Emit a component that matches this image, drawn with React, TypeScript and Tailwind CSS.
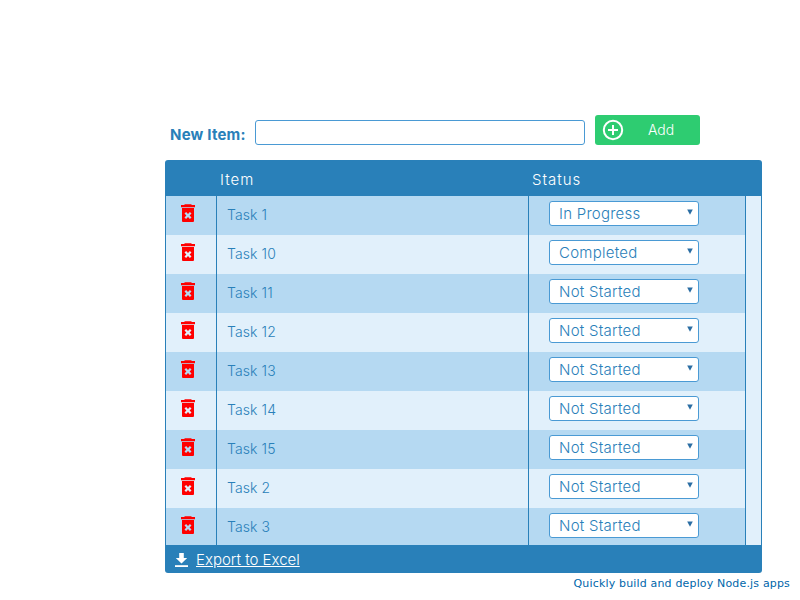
const rows = [
  { name: "Task 1", status: "In Progress" },
  { name: "Task 10", status: "Completed" },
  { name: "Task 11", status: "Not Started" },
  { name: "Task 12", status: "Not Started" },
  { name: "Task 13", status: "Not Started" },
  { name: "Task 14", status: "Not Started" },
  { name: "Task 15", status: "Not Started" },
  { name: "Task 2", status: "Not Started" },
  { name: "Task 3", status: "Not Started" },
]

function TrashIcon() {
  return (
    <svg width="16" height="19" viewBox="0 0 16 19" className="block">
      <path d="M4.5 1V0.3h7V1h3.5v2.2H1V1z" fill="#ff0000" />
      <path
        fillRule="evenodd"
        clipRule="evenodd"
        d="M2 4h12v13a1 1 0 0 1-1 1H3a1 1 0 0 1-1-1zM4.5 9.6L6.1 8 8 9.9 9.9 8l1.6 1.6-1.9 1.9 1.9 1.9L9.9 15 8 13.1 6.1 15l-1.6-1.6 1.9-1.9z"
        fill="#ff0000"
      />
    </svg>
  )
}

function PlusIcon() {
  return (
    <svg width="22" height="22" viewBox="0 0 22 22" fill="none" stroke="#fff" strokeWidth="2" className="block">
      <circle cx="11" cy="11" r="9.2" />
      <path d="M11 6v10M6 11h10" />
    </svg>
  )
}

function DownloadIcon() {
  return (
    <svg width="13" height="14" viewBox="0 0 13 14" fill="#fff" className="mt-[1px] block">
      <path d="M4.2 0h4.6v5h3.4L6.5 10.6 0.8 5h3.4z" />
      <rect x="0" y="12.2" width="13" height="1.8" />
    </svg>
  )
}

export default function App() {
  return (
    <div className="relative h-[600px] w-[800px] overflow-hidden bg-white pt-[115px] font-['Inter',sans-serif] text-[#2980b9]">
      <div className="ml-[170px] flex h-[30px] items-center">
        <label className="w-[85px] pt-[10px] text-[15px] leading-[22px] font-bold tracking-[0.2px]">New Item:</label>
        <input className="mt-[5px] h-[25px] w-[330px] rounded-[3px] border border-[#4a9ad4] bg-white" />
        <button className="ml-[10px] flex h-[30px] w-[105px] items-center rounded-[3px] bg-[#2ecc71] pl-[7px] text-[14px] font-light text-white">
          <PlusIcon />
          <span className="ml-[24px] pb-[2px]">Add</span>
        </button>
      </div>

      <div className="mt-[15px] ml-[165px] flex h-[413px] w-[597px] flex-col overflow-hidden rounded-[3px] bg-[#2980b9]">
        <div className="flex h-[36px] shrink-0 items-center pt-[4px] text-[15px] leading-[22px] font-light tracking-[1px] text-white">
          <div className="w-[55px]" />
          <div className="w-[312px]">Item</div>
          <div>Status</div>
        </div>
        <div className="h-[349px] overflow-hidden border-x border-[#2980b9] bg-[#e1f0fb]">
          {rows.map((row, i) => (
            <div
              key={row.name}
              className={`flex h-[39px] w-[580px] items-center ${i % 2 === 0 ? "bg-[#b5d9f2]" : "bg-[#e1f0fb]"}`}
            >
              <div className="flex h-full w-[51px] shrink-0 justify-center border-r border-[#2980b9] pt-[8px] pr-[7px]">
                <TrashIcon />
              </div>
              <div className="flex h-full w-[312px] shrink-0 items-center border-r border-[#2980b9] pb-[3px] pl-[10px] text-[14px] font-light tracking-[0.1px]">
                {row.name}
              </div>
              <div className="flex h-full flex-1 border-r border-[#2980b9] pt-[5px] pl-[20px]">
                <div className="relative h-[25px] w-[150px]">
                  <select
                    defaultValue={row.status}
                    className="block h-[25px] w-[150px] appearance-none rounded-[3px] border border-[#4a9ad4] bg-white pt-[1px] pl-[9px] text-[15px] font-light tracking-[0.25px] text-[#2980b9]"
                  >
                    <option>In Progress</option>
                    <option>Completed</option>
                    <option>Not Started</option>
                  </select>
                  <svg width="6" height="6" viewBox="0 0 6 6" className="pointer-events-none absolute top-[8px] right-[6px]">
                    <path d="M0.2 0.5h5.6L3 5.8z" fill="#2a6da3" />
                  </svg>
                </div>
              </div>
            </div>
          ))}
        </div>
        <div className="flex h-[28px] shrink-0 items-center pl-[10px] text-[15px] leading-[22px] font-light text-white">
          <DownloadIcon />
          <a className="mt-[1px] ml-[8px] underline">Export to Excel</a>
        </div>
      </div>

      <div className="pt-[4px] pr-[10px] text-right font-['DejaVu_Sans',sans-serif] text-[11px] leading-[14px] tracking-[0.165px] text-[#0066aa]">
        Quickly build and deploy Node.js apps
      </div>
    </div>
  )
}
